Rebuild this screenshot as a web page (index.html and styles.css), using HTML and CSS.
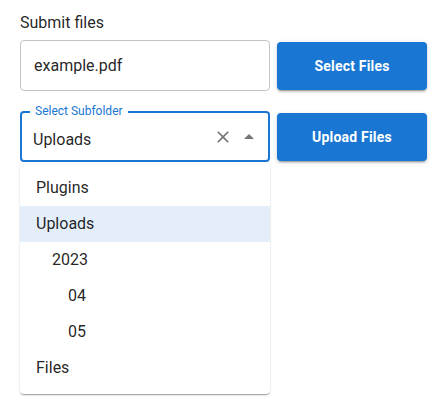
FILE: index.html
```html
<!DOCTYPE html>
<html>
<head>
<meta charset="utf-8">
<link rel="stylesheet" href="styles.css">
</head>
<body>
<div class="page">
  <div class="title">Submit files</div>
  <div class="grid">
    <div class="field">
      <span class="value">example.pdf</span>
    </div>
    <button class="btn">Select Files</button>
    <div class="auto">
      <fieldset class="outline"><legend>Select Subfolder</legend></fieldset>
      <label class="label">Select Subfolder</label>
      <span class="value auto-value">Uploads</span>
      <span class="icon clear">
        <svg viewBox="0 0 24 24" width="20" height="20"><path d="M19 6.41 17.59 5 12 10.59 6.41 5 5 6.41 10.59 12 5 17.59 6.41 19 12 13.41 17.59 19 19 17.59 13.41 12z"/></svg>
      </span>
      <span class="icon arrow">
        <svg viewBox="0 0 24 24" width="24" height="24"><path d="m7 14 5-5 5 5z"/></svg>
      </span>
      <ul class="popup">
        <li class="opt">Plugins</li>
        <li class="opt selected">Uploads</li>
        <li class="opt l1">2023</li>
        <li class="opt l2">04</li>
        <li class="opt l2">05</li>
        <li class="opt">Files</li>
      </ul>
    </div>
    <button class="btn">Upload Files</button>
  </div>
</div>
</body>
</html>
```

FILE: styles.css
```css
html, body {
  margin: 0;
  padding: 0;
  background: #fff;
}
body {
  font-family: Roboto, "Liberation Sans", Arial, sans-serif;
  color: rgba(0, 0, 0, 0.87);
  width: 448px;
  height: 414px;
  overflow: hidden;
}
.page {
  padding: 11px 20px 0 20px;
}
.title {
  font-size: 16px;
  line-height: 24px;
  height: 24px;
  margin-bottom: 5px;
}
.grid {
  display: grid;
  grid-template-columns: 250px 150px;
  grid-template-rows: 51px 51px;
  column-gap: 7px;
  row-gap: 20px;
  align-items: center;
}
.field {
  box-sizing: border-box;
  height: 51px;
  border: 1px solid rgba(0, 0, 0, 0.23);
  border-radius: 4px;
  padding: 0 13px;
  display: flex;
  align-items: center;
}
.value {
  font-size: 16px;
  line-height: 24px;
}
.btn {
  height: 48px;
  width: 150px;
  border: none;
  border-radius: 4px;
  background: #1976d2;
  color: #fff;
  font-family: Roboto, "Liberation Sans", Arial, sans-serif;
  font-size: 14px;
  font-weight: 700;
  letter-spacing: 0.2px;
  box-shadow: 0 3px 1px -2px rgba(0,0,0,0.2), 0 2px 2px 0 rgba(0,0,0,0.14), 0 1px 5px 0 rgba(0,0,0,0.12);
  padding: 0;
}
.auto {
  position: relative;
  height: 51px;
  box-sizing: border-box;
  display: flex;
  align-items: center;
  padding: 6px 0 0 13px;
}
.outline {
  position: absolute;
  inset: -5px 0 0 0;
  margin: 0;
  padding: 0 8px;
  border: 2px solid #1976d2;
  border-radius: 4px;
  pointer-events: none;
}
.outline legend {
  font-size: 12px;
  line-height: 11px;
  padding: 0 5px;
  visibility: hidden;
}
.label {
  position: absolute;
  left: 15px;
  top: -7px;
  font-size: 12px;
  line-height: 14px;
  color: #1976d2;
}
.icon {
  position: absolute;
  display: flex;
  fill: rgba(0, 0, 0, 0.54);
}
.clear {
  left: 193px;
  top: 16px;
}
.arrow {
  left: 217px;
  top: 14px;
}
.popup {
  position: absolute;
  left: 0;
  right: 0;
  top: 51px;
  margin: 0;
  padding: 8px 0;
  list-style: none;
  background: #fff;
  border-radius: 4px;
  box-shadow: 0 2px 1px -1px rgba(0,0,0,0.2), 0 1px 1px 0 rgba(0,0,0,0.14), 0 1px 3px 0 rgba(0,0,0,0.12);
  z-index: 2;
}
.opt {
  height: 36px;
  line-height: 36px;
  font-size: 16px;
  padding-left: 16px;
}
.opt.l1 { padding-left: 32px; }
.opt.l2 { padding-left: 48px; }
.opt.selected {
  background: rgba(25, 118, 210, 0.12);
}
```
